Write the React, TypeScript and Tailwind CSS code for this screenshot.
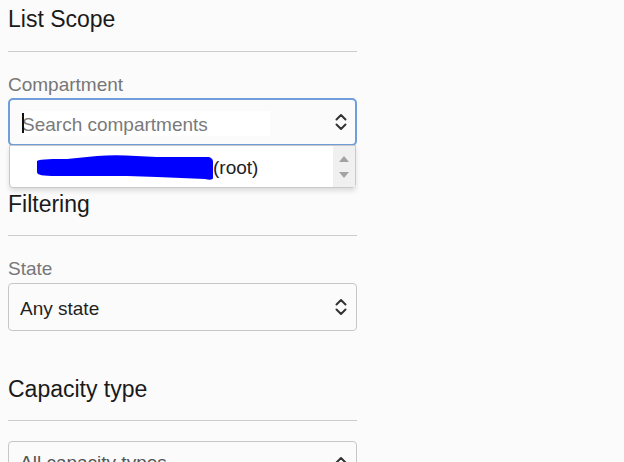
import React from 'react';

function Chevrons() {
  return (
    <svg width="12" height="20" viewBox="0 0 12 20" fill="none" stroke="#333" strokeWidth="2" strokeLinecap="round" strokeLinejoin="round">
      <path d="M1.5 7.5 L6 3 L10.5 7.5" />
      <path d="M1.5 12.5 L6 17 L10.5 12.5" />
    </svg>
  );
}

function Scribble() {
  return (
    <svg width="176" height="26" viewBox="0 0 176 26" className="shrink-0">
      <path
        d="M0 7 C 3 5, 18 5, 30 5 L 60 2 C 80 0, 100 2, 120 3 L 170 3 C 174 3, 176 5, 176 8 L 176 24 C 176 26, 172 26, 168 25 L 120 23 L 90 22 L 60 22 L 20 22 C 5 22, 0 21, 0 18 Z"
        fill="#0000ff"
      />
    </svg>
  );
}

function Section({ title, children }: { title: string; children: React.ReactNode }) {
  return (
    <div>
      <h2 className="text-[23px] leading-[28px] text-[#1a1a1a]">{title}</h2>
      <div className="mt-[17px] h-px bg-[#cccccc]" />
      {children}
    </div>
  );
}

function SelectBox({ value, muted }: { value: string; muted?: boolean }) {
  return (
    <div className="h-[48px] rounded-[4px] border border-[#c7c7c7] bg-[#fbfbfb] flex items-center justify-between pl-[11px] pr-[9px]">
      <span
        className={`block text-[19px] leading-[22px] ${muted ? 'mb-[4px] text-[#555]' : 'pt-[3px] text-[#1f1f1f]'}`}
      >
        {value}
      </span>
      <Chevrons />
    </div>
  );
}

export default function App() {
  return (
    <div
      className="w-[624px] h-[462px] overflow-hidden bg-[#fbfbfb]"
      style={{ fontFamily: '"Liberation Sans", Arial, sans-serif' }}
    >
      <div className="w-[349px] ml-[8px] pt-[5px]">
        {/* List Scope */}
        <div>
          <h2 className="text-[23px] leading-[28px] text-[#1a1a1a]">List Scope</h2>
          <div className="mt-[18px] h-px bg-[#cccccc]" />
          <label className="block mt-[22px] text-[19px] leading-[22px] text-[#777]">Compartment</label>
          <div className="relative mt-[2px] z-10">
            <div className="h-[48px] rounded-[5px] border-2 border-[#6f9edb] bg-[#fbfbfb] flex items-center justify-between pl-[12px] pr-[8px]">
              <div className="relative mt-[3px] h-[25px] w-[248px] bg-white flex items-center">
                <span className="absolute left-0 top-[2px] w-[2px] h-[20px] bg-[#111]" />
                <span className="block pt-[2px] text-[19px] leading-[22px] text-[#7a7a7a]">Search compartments</span>
              </div>
              <Chevrons />
            </div>
            <div className="absolute left-[1px] right-[1px] top-[47px] h-[43px] bg-white border border-[#c9c9c9] rounded-b-[4px] shadow-[0_3px_5px_rgba(0,0,0,0.12)] flex">
              <div className="flex-1 flex items-center pl-[27px]">
                <Scribble />
                <span className="block pt-[3px] text-[19px] leading-[22px] text-[#222]">(root)</span>
              </div>
              <div className="w-[22px] bg-[#f0f0f0] flex flex-col items-center justify-between pt-[10px] pb-[9px]">
                <svg width="10" height="6" viewBox="0 0 10 6"><path d="M0 6 L5 0 L10 6 Z" fill="#a3a3a3" /></svg>
                <svg width="10" height="6" viewBox="0 0 10 6"><path d="M0 0 L5 6 L10 0 Z" fill="#a3a3a3" /></svg>
              </div>
            </div>
          </div>
        </div>

        {/* Filtering */}
        <div className="mt-[44px]">
          <Section title="Filtering">
            <label className="block mt-[22px] text-[19px] leading-[22px] text-[#777]">State</label>
            <div className="mt-[3px]">
              <SelectBox value="Any state" />
            </div>
          </Section>
        </div>

        {/* Capacity type */}
        <div className="mt-[44px]">
          <Section title="Capacity type">
            <div className="mt-[20px]">
              <SelectBox value="All capacity types" muted />
            </div>
          </Section>
        </div>
      </div>
    </div>
  );
}
